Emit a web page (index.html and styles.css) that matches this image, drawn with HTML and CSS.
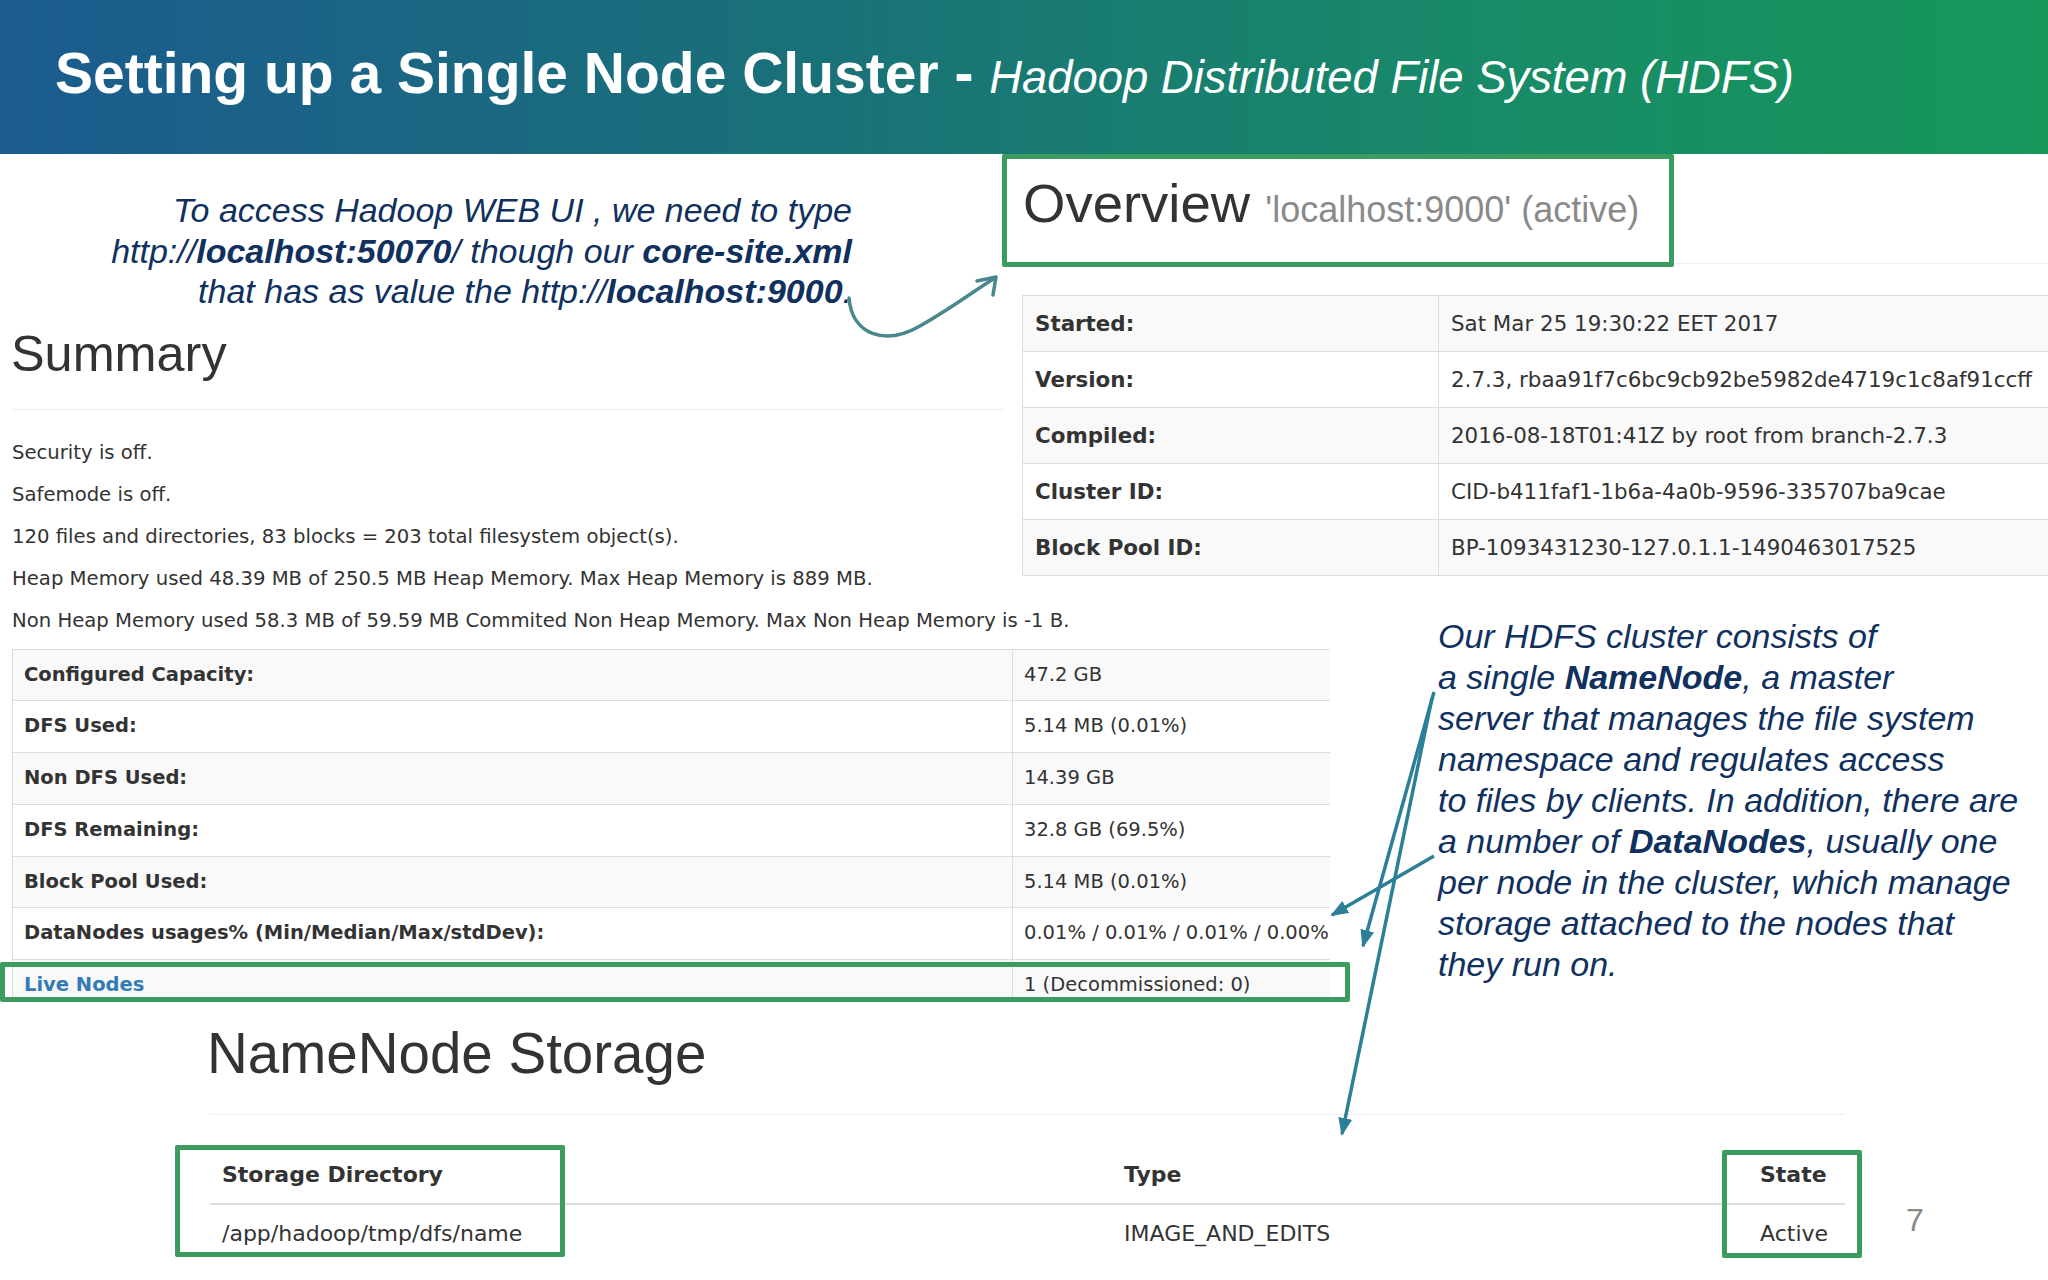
FILE: index.html
```html
<!DOCTYPE html>
<html lang="en">
<head>
<meta charset="utf-8">
<title>Setting up a Single Node Cluster - HDFS</title>
<link rel="stylesheet" href="styles.css">
</head>
<body>
<div class="slide">
  <header class="banner">
    <h1 class="title"><b>Setting up a Single Node Cluster - </b><i>Hadoop Distributed File System (HDFS)</i></h1>
  </header>

  <section class="top">
    <div class="left">
      <p class="note note-left">To access Hadoop WEB UI , we need to type<br>http://<b>localhost:50070</b>/ though our <b>core-site.xml</b><br>that has as value the http://<b>localhost:9000</b>.</p>
      <h2 class="summary-h">Summary</h2>
      <hr class="rule rule-summary">
      <div class="facts">
        <p>Security is off.</p>
        <p>Safemode is off.</p>
        <p>120 files and directories, 83 blocks = 203 total filesystem object(s).</p>
        <p>Heap Memory used 48.39 MB of 250.5 MB Heap Memory. Max Heap Memory is 889 MB.</p>
        <p>Non Heap Memory used 58.3 MB of 59.59 MB Commited Non Heap Memory. Max Non Heap Memory is -1 B.</p>
      </div>
    </div>
    <div class="right">
      <div class="ov-head">
        <div class="ov-box">
          <h2 class="ov-title">Overview <small>'localhost:9000' (active)</small></h2>
        </div>
        <div class="ov-rule"></div>
      </div>
      <table class="ov-table">
        <colgroup><col class="ov-c1"><col class="ov-c2"></colgroup>
        <tr><th>Started:</th><td>Sat Mar 25 19:30:22 EET 2017</td></tr>
        <tr><th>Version:</th><td>2.7.3, rbaa91f7c6bc9cb92be5982de4719c1c8af91ccff</td></tr>
        <tr><th>Compiled:</th><td>2016-08-18T01:41Z by root from branch-2.7.3</td></tr>
        <tr><th>Cluster ID:</th><td>CID-b411faf1-1b6a-4a0b-9596-335707ba9cae</td></tr>
        <tr><th>Block Pool ID:</th><td>BP-1093431230-127.0.1.1-1490463017525</td></tr>
      </table>
    </div>
  </section>

  <section class="mid">
    <div class="sum-wrap">
      <div class="sum-clip">
        <table class="sum-table">
          <colgroup><col class="sum-c1"><col class="sum-c2"></colgroup>
          <tr><th>Configured Capacity:</th><td>47.2 GB</td></tr>
          <tr><th>DFS Used:</th><td>5.14 MB (0.01%)</td></tr>
          <tr><th>Non DFS Used:</th><td>14.39 GB</td></tr>
          <tr><th>DFS Remaining:</th><td>32.8 GB (69.5%)</td></tr>
          <tr><th>Block Pool Used:</th><td>5.14 MB (0.01%)</td></tr>
          <tr><th>DataNodes usages% (Min/Median/Max/stdDev):</th><td>0.01% / 0.01% / 0.01% / 0.00%</td></tr>
          <tr><th><a class="live">Live Nodes</a></th><td>1 (Decommissioned: 0)</td></tr>
        </table>
      </div>
      <div class="hl hl-live"></div>
    </div>
    <p class="note note-right">Our HDFS cluster consists of<br>a single <b>NameNode</b>, a master<br>server that manages the file system<br>namespace and regulates access<br>to files by clients. In addition, there are<br>a number of <b>DataNodes</b>, usually one<br>per node in the cluster, which manage<br>storage attached to the nodes that<br>they run on.</p>
  </section>

  <section class="bottom">
    <div class="storage">
      <h2 class="nn-h">NameNode Storage</h2>
      <hr class="rule rule-storage">
      <table class="st-table">
        <colgroup><col class="st-c1"><col class="st-c2"><col class="st-c3"></colgroup>
        <thead><tr><th>Storage Directory</th><th>Type</th><th>State</th></tr></thead>
        <tbody><tr><td>/app/hadoop/tmp/dfs/name</td><td>IMAGE_AND_EDITS</td><td>Active</td></tr></tbody>
      </table>
    </div>
    <span class="page-num">7</span>
    <div class="hl hl-dir"></div>
    <div class="hl hl-state"></div>
  </section>

  <svg class="arrows" width="2048" height="1280" viewBox="0 0 2048 1280" aria-hidden="true">
    <defs>
      <marker id="ah" viewBox="0 0 18 14" refX="16" refY="7" markerWidth="18" markerHeight="14" markerUnits="userSpaceOnUse" orient="auto">
        <path d="M0 0 L18 7 L0 14 Z" fill="#2b7f97"/>
      </marker>
    </defs>
    <path d="M849 298 C 852 335, 885 346, 920 326 S 975 290, 995 278" fill="none" stroke="#4a878d" stroke-width="3.5" stroke-linecap="round"/>
    <path d="M977 281 L996 277 L993 295" fill="none" stroke="#4a878d" stroke-width="3.5" stroke-linecap="round" stroke-linejoin="round"/>
    <line x1="1434" y1="692" x2="1363" y2="946" stroke="#2b7f97" stroke-width="3.5" marker-end="url(#ah)"/>
    <line x1="1432" y1="698" x2="1342" y2="1134" stroke="#2b7f97" stroke-width="3.5" marker-end="url(#ah)"/>
    <line x1="1434" y1="856" x2="1332" y2="915" stroke="#2b7f97" stroke-width="3.5" marker-end="url(#ah)"/>
  </svg>
</div>
</body>
</html>
```

FILE: styles.css
```css
* { box-sizing: border-box; }

html, body {
  margin: 0;
  padding: 0;
}

body {
  width: 2048px;
  height: 1280px;
  overflow: hidden;
  background: #ffffff;
  font-family: "DejaVu Sans", "Noto Sans", sans-serif;
  color: #333333;
}

.slide {
  position: relative;
  width: 2048px;
  height: 1280px;
  overflow: hidden;
}

/* ---------- banner ---------- */
.banner {
  height: 154px;
  padding: 38px 0 0 55px;
  background: linear-gradient(90deg, #1b5b8f 0%, #197178 40%, #188a68 72%, #16975a 100%);
}

.title {
  margin: 0;
  font-family: "Liberation Sans", Arial, sans-serif;
  font-size: 57px;
  line-height: 70px;
  font-weight: 700;
  color: #ffffff;
  white-space: nowrap;
}

.title i {
  font-weight: 400;
  font-size: 45.4px;
}

/* ---------- callout notes ---------- */
.note {
  margin: 0;
  font-family: "Liberation Sans", Arial, sans-serif;
  font-style: italic;
  font-size: 34px;
  color: #10305e;
  white-space: nowrap;
}

.note b { font-weight: 700; }

.note-left {
  padding: 36px 150px 0 0;
  text-align: right;
  line-height: 40.5px;
}

.note-right {
  margin-top: -26px;
  line-height: 41.1px;
}

/* ---------- top section ---------- */
.top {
  display: flex;
  align-items: flex-start;
}

.left {
  flex: none;
  width: 1002px;
}

.summary-h {
  margin: 14px 0 0 11px;
  font-family: "Liberation Sans", Arial, sans-serif;
  font-weight: 400;
  font-size: 50.4px;
  line-height: 56px;
  color: #333333;
}

.rule {
  height: 0;
  border: 0;
  border-top: 1px solid #eeeeee;
}

.rule-summary {
  margin: 27px 0 0 13px;
  width: 990px;
}

.facts { margin-top: 22px; }

.facts p {
  margin: 0;
  padding-left: 12px;
  font-size: 19.65px;
  line-height: 42px;
  white-space: nowrap;
}

.right {
  flex: 1;
  min-width: 0;
}

.ov-head {
  display: flex;
  align-items: flex-start;
}

.ov-box {
  flex: none;
  width: 672px;
  height: 113px;
  border: 5px solid #3c9c60;
  border-radius: 2px;
  padding: 15px 0 0 16px;
}

.ov-title {
  margin: 0;
  font-family: "Liberation Sans", Arial, sans-serif;
  font-weight: 400;
  font-size: 54.5px;
  line-height: 60px;
  color: #333333;
  white-space: nowrap;
}

.ov-title small {
  font-size: 36px;
  color: #8a8a8a;
}

.ov-rule {
  flex: 1;
  height: 110px;
  border-bottom: 1px solid #eeeeee;
}

.ov-table {
  margin: 28px 0 0 20px;
  width: 1080px;
  border-collapse: collapse;
  table-layout: fixed;
  font-size: 21.4px;
}

.ov-c1 { width: 416px; }
.ov-c2 { width: 664px; }

.ov-table th,
.ov-table td {
  border: 1px solid #dddddd;
  padding: 0 12px;
  line-height: 55px;
  text-align: left;
  white-space: nowrap;
  overflow: hidden;
}

.ov-table th { font-weight: 700; }
.ov-table td { font-weight: 400; }

.ov-table tr:nth-child(odd),
.sum-table tr:nth-child(odd) { background: #f9f9f9; }

/* ---------- middle section ---------- */
.mid {
  display: flex;
  align-items: flex-start;
}

.sum-wrap {
  position: relative;
  flex: none;
  width: 1438px;
  padding-top: 7px;
}

.sum-clip {
  margin-left: 12px;
  width: 1318px;
  height: 352px;
  overflow: hidden;
}

.sum-table {
  width: 1318px;
  border-collapse: collapse;
  table-layout: fixed;
  font-size: 19.5px;
}

.sum-c1 { width: 1000px; }
.sum-c2 { width: 318px; }

.sum-table th,
.sum-table td {
  border: 1px solid #dddddd;
  padding: 0 11px;
  line-height: 50.8px;
  text-align: left;
  white-space: nowrap;
}

.sum-table th { font-weight: 700; }
.sum-table td { font-weight: 400; }

.live { color: #337ab7; }

/* highlight boxes drawn over the screenshot */
.hl {
  position: absolute;
  border: 5px solid #3c9c60;
  border-radius: 2px;
  pointer-events: none;
}

.hl-live { left: 0; top: 320px; width: 1350px; height: 40px; }
.hl-dir { left: 175px; top: 144px; width: 390px; height: 112px; }
.hl-state { left: 1722px; top: 149px; width: 140px; height: 108px; }

/* ---------- bottom section ---------- */
.bottom {
  position: relative;
  display: flex;
  align-items: flex-end;
  padding-left: 210px;
}

.storage {
  flex: none;
  width: 1635px;
}

.nn-h {
  margin: 22px 0 0;
  text-indent: -3px;
  font-family: "Liberation Sans", Arial, sans-serif;
  font-weight: 400;
  font-size: 56.5px;
  line-height: 61px;
  color: #333333;
}

.rule-storage { margin: 30px 0 0; }

.st-table {
  margin-top: 32px;
  width: 100%;
  border-collapse: collapse;
  table-layout: fixed;
  font-size: 22px;
}

.st-c1 { width: 902px; }
.st-c2 { width: 636px; }
.st-c3 { width: 97px; }

.st-table th {
  text-align: left;
  font-weight: 700;
  padding: 0 12px;
  line-height: 56px;
  border-bottom: 2px solid #dddddd;
  white-space: nowrap;
}

.st-table td {
  padding: 0 12px;
  line-height: 57px;
  white-space: nowrap;
}

.page-num {
  margin: 0 0 26px 61px;
  font-family: "Liberation Sans", Arial, sans-serif;
  font-size: 32px;
  line-height: 32px;
  color: #888888;
}

/* ---------- annotation arrows ---------- */
.arrows {
  position: absolute;
  left: 0;
  top: 0;
  pointer-events: none;
}
```
